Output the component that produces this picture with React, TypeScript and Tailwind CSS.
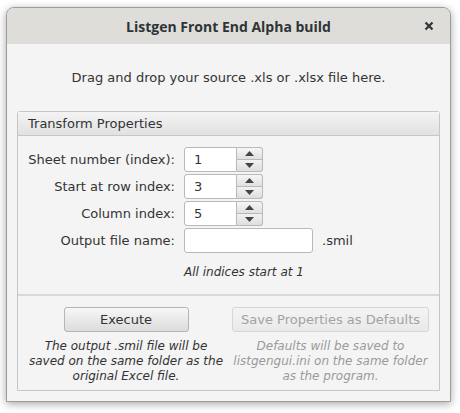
import React from 'react';

const Spinner = ({ value }: { value: string }) => (
  <div className="flex h-[25px]">
    <div className="w-[53px] h-full bg-white border border-[#b9b9b9] rounded-l-[3px] flex items-center pl-[9px] text-[13px] text-[#333]">
      {value}
    </div>
    <div className="w-[26px] h-full flex flex-col">
      <div className="h-[13px] border border-l-0 border-[#b9b9b9] rounded-tr-[3px] bg-gradient-to-b from-[#f6f6f6] to-[#e0e0e0] flex items-center justify-center">
        <svg width="9" height="5" viewBox="0 0 9 5"><path d="M0 5 L4.5 0 L9 5 Z" fill="#444" /></svg>
      </div>
      <div className="h-[12px] border border-t-0 border-l-0 border-[#b9b9b9] rounded-br-[3px] bg-gradient-to-b from-[#f2f2f2] to-[#dedede] flex items-center justify-center">
        <svg width="9" height="5" viewBox="0 0 9 5"><path d="M0 0 L4.5 5 L9 0 Z" fill="#444" /></svg>
      </div>
    </div>
  </div>
);

const FIELDS = [
  { label: 'Sheet number (index):', value: '1' },
  { label: 'Start at row index:', value: '3' },
  { label: 'Column index:', value: '5' },
];

export default function App() {
  return (
    <div className="w-[460px] h-[413px] bg-white pt-[7px] pl-[6px] font-['DejaVu_Sans',sans-serif] text-[#333]">
      <div className="w-[445px] h-[395px] rounded-t-[8px] border border-[#9c9c9c] bg-[#f4f4f4] shadow-[0_2px_8px_rgba(0,0,0,0.35)] overflow-hidden flex flex-col">
        <div className="h-[36px] shrink-0 bg-[#deddda] flex items-center relative">
          <div className="flex-1 text-center font-['Open_Sans',sans-serif] font-bold text-[14px] text-[#2e3436]">
            Listgen Front End Alpha build
          </div>
          <div className="absolute right-[13px] top-[10px]">
            <svg width="16" height="16" viewBox="0 0 16 16">
              <path d="M4.5 4.5 L11.5 11.5 M11.5 4.5 L4.5 11.5" stroke="#2e3436" strokeWidth="2.2" />
            </svg>
          </div>
        </div>
        <div className="h-[67px] shrink-0 flex items-center justify-center text-[13px] text-[#333]">
          Drag and drop your source .xls or .xlsx file here.
        </div>
        <div className="mx-[10px] flex-1 mb-[10px] border border-[#c6c6c6] rounded-t-[3px] flex flex-col">
          <div className="h-[24px] shrink-0 bg-gradient-to-b from-[#f4f4f4] to-[#e1e1e1] border-b border-[#c6c6c6] flex items-center pl-[10px] text-[13px]">
            Transform Properties
          </div>
          <div className="pt-[11px] h-[160px] shrink-0 border-b-2 border-[#d8d8d8]">
            <div className="grid grid-cols-[157px_auto] gap-x-[9px] gap-y-[2px] items-center">
              {FIELDS.map((f) => (
                <React.Fragment key={f.label}>
                  <div className="text-right text-[13px]">{f.label}</div>
                  <Spinner value={f.value} />
                </React.Fragment>
              ))}
              <div className="text-right text-[13px]">Output file name:</div>
              <div className="flex items-center h-[25px]">
                <div className="w-[129px] h-full bg-white border border-[#b9b9b9] rounded-[3px]" />
                <span className="ml-[9px] text-[13px]">.smil</span>
              </div>
              <div />
              <div className="text-[12px] italic pt-[8px]">All indices start at 1</div>
            </div>
          </div>
          <div className="flex pt-[11px] pl-[2px]">
            <div className="w-[217px] flex flex-col items-center">
              <button className="w-[125px] h-[25px] border border-[#b5b5b5] rounded-[3px] bg-gradient-to-b from-[#f7f7f7] to-[#dcdcdc] text-[13px]">
                Execute
              </button>
              <p className="mt-[7px] text-[12px] italic text-center leading-[15px] whitespace-nowrap text-[#333]">
                The output .smil file will be<br />saved on the same folder as the<br />original Excel file.
              </p>
            </div>
            <div className="flex-1 pr-[10px] flex flex-col items-center">
              <button disabled className="w-[197px] h-[25px] border border-[#d6d6d6] rounded-[3px] bg-gradient-to-b from-[#f4f4f4] to-[#e9e9e9] text-[13px] text-[#a3a3a3]">
                Save Properties as Defaults
              </button>
              <p className="mt-[7px] text-[12px] italic text-center leading-[15px] whitespace-nowrap text-[#9a9a9a]">
                Defaults will be saved to<br />listgengui.ini on the same folder<br />as the program.
              </p>
            </div>
          </div>
        </div>
      </div>
    </div>
  );
}
